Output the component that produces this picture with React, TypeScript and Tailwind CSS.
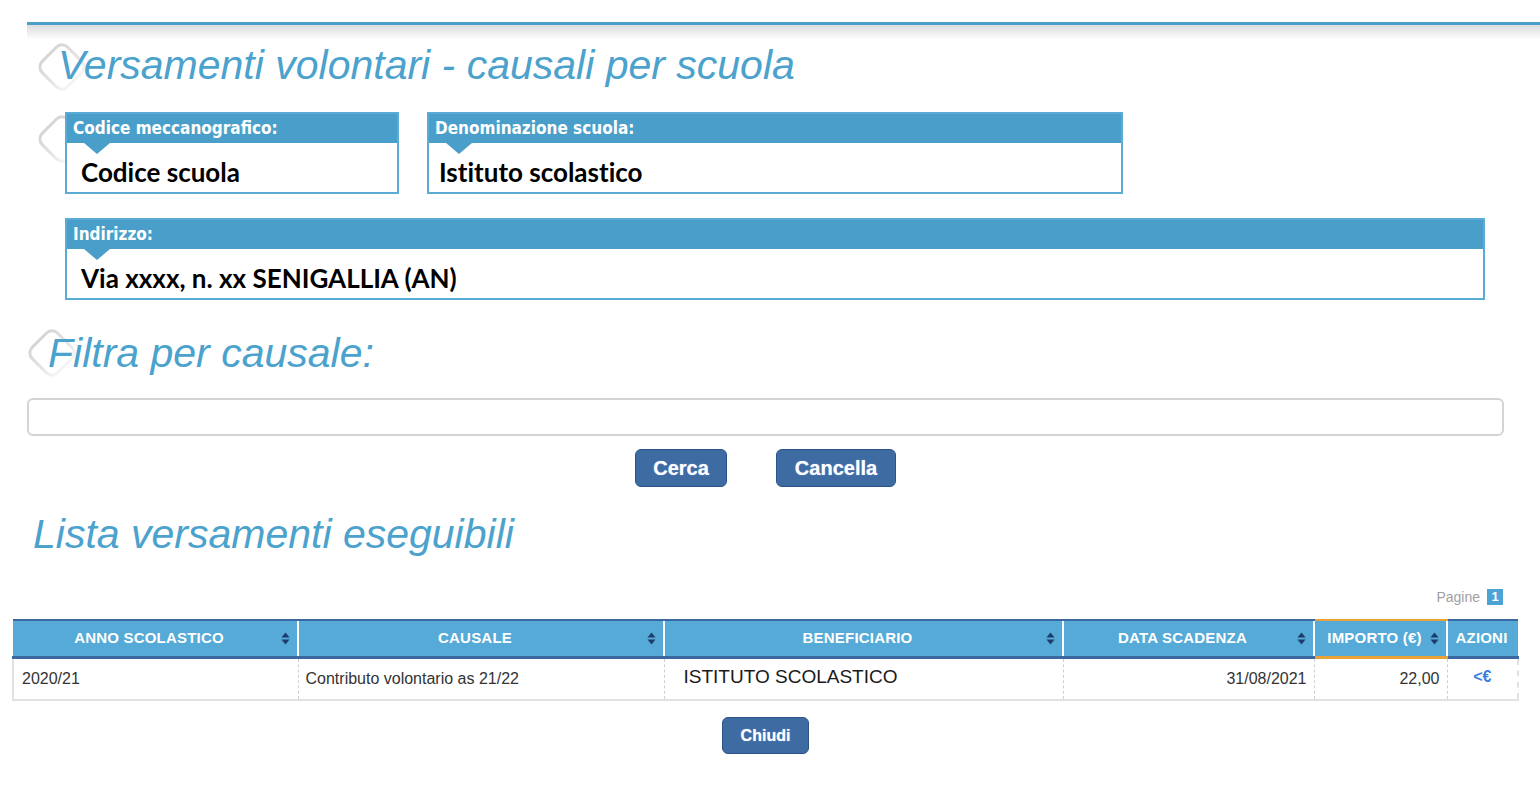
import React from 'react';

const SANS = '[font-family:"Liberation_Sans",Arial,sans-serif]';

function Diamond({ className }: { className: string }) {
  return (
    <svg className={className} width="60" height="60" viewBox="0 0 60 60" fill="none">
      <defs>
        <linearGradient id="dg" x1="0" y1="0" x2="1" y2="0">
          <stop offset="0" stopColor="#d6d6d6" />
          <stop offset="0.6" stopColor="#e4e4e4" />
          <stop offset="1" stopColor="#f4f4f4" />
        </linearGradient>
      </defs>
      <rect x="12" y="12" width="36" height="36" rx="8" transform="rotate(45 30 30)" stroke="url(#dg)" strokeWidth="3" />
    </svg>
  );
}

function SortIcon() {
  return (
    <svg width="9" height="13" viewBox="0 0 9 13" className="shrink-0">
      <path d="M4.5 0.5 L8.5 5.5 H0.5 Z" fill="#1d3c6c" />
      <path d="M4.5 12.5 L8.5 7.5 H0.5 Z" fill="#1d3c6c" />
    </svg>
  );
}

function InfoBox({ label, value, className, valuePad = 'pl-[14px]' }: { label: string; value: string; className: string; valuePad?: string }) {
  return (
    <div className={`relative border-2 border-[#5aabd6] bg-white ${className}`}>
      <div className="h-[29px] bg-[#4a9fca] pl-[6px] text-[17px] font-bold leading-[29px] text-white [font-family:'Liberation_Sans_Narrow','DejaVu_Sans_Condensed',sans-serif]">
        {label}
      </div>
      <div className="absolute left-[17px] top-[29px] h-0 w-0 border-l-[13px] border-r-[13px] border-t-[11px] border-l-transparent border-r-transparent border-t-[#4a9fca]" />
      <div className={`h-[49px] ${valuePad} pt-[14px] text-[26px] font-bold leading-[30px] text-black [font-family:Lato,sans-serif] [font-variant-ligatures:none]`}>
        {value}
      </div>
    </div>
  );
}

const headers = [
  { label: 'ANNO SCOLASTICO', w: 'w-[285px]', sort: true },
  { label: 'CAUSALE', w: 'w-[366px]', sort: true },
  { label: 'BENEFICIARIO', w: 'w-[399px]', sort: true },
  { label: 'DATA SCADENZA', w: 'w-[251px]', sort: true },
  { label: 'IMPORTO (€)', w: 'w-[133px]', sort: true, active: true },
  { label: 'AZIONI', w: 'w-[71px]', sort: false },
];

export default function App() {
  return (
    <div className={`relative h-[786px] w-[1540px] overflow-hidden bg-white ${SANS}`}>
      {/* top rule */}
      <div className="ml-[27px] mt-[22px] h-[3px] bg-[#4a9fca]" />
      <div className="ml-[27px] h-[15px] bg-gradient-to-b from-[#dcdcdc] to-white" />

      {/* page title */}
      <div className="relative h-[50px]">
        <Diamond className="absolute left-[32px] top-[-3px]" />
        <h1 className="relative pl-[58px] text-[41px] font-normal italic leading-[50px] text-[#4ba2cd]">
          Versamenti volontari - causali per scuola
        </h1>
      </div>

      {/* school info */}
      <div className="relative mt-[22px] flex pl-[65px]">
        <Diamond className="absolute left-[32px] top-[-3px]" />
        <InfoBox label="Codice meccanografico:" value="Codice scuola" className="w-[334px]" />
        <InfoBox label="Denominazione scuola:" value="Istituto scolastico" className="ml-[28px] w-[696px]" valuePad="pl-[10px]" />
      </div>
      <div className="mt-[24px] pl-[65px]">
        <InfoBox label="Indirizzo:" value="Via xxxx, n. xx SENIGALLIA (AN)" className="w-[1420px]" />
      </div>

      {/* filter */}
      <div className="relative mt-[28px] h-[50px]">
        <Diamond className="absolute left-[22px] top-[-5px]" />
        <h2 className="relative pl-[48px] text-[41px] font-normal italic leading-[50px] text-[#4ba2cd]">
          Filtra per causale:
        </h2>
      </div>
      <div className="mt-[20px] pl-[27px]">
        <input className="block h-[38px] w-[1477px] rounded-[6px] border-2 border-[#d4d4d4] bg-white px-2 text-[16px] outline-none" />
      </div>
      <div className="mt-[13px] flex gap-[49px] pl-[635px]">
        <button className="h-[38px] w-[92px] rounded-[6px] border border-[#2c5387] bg-[#3f6ba3] text-[20px] font-bold text-white [text-shadow:0_0_1px_#9ec5ff]">
          Cerca
        </button>
        <button className="h-[38px] w-[120px] rounded-[6px] border border-[#2c5387] bg-[#3f6ba3] text-[20px] font-bold text-white [text-shadow:0_0_1px_#9ec5ff]">
          Cancella
        </button>
      </div>

      {/* list */}
      <h2 className="mt-[22px] h-[50px] pl-[33px] text-[41px] font-normal italic leading-[50px] text-[#4ba2cd]">
        Lista versamenti eseguibili
      </h2>
      <div className="mt-[28px] flex h-[20px] items-center justify-end gap-[7px] pr-[37px]">
        <span className="text-[14px] text-[#a0a0a0]">Pagine</span>
        <span className="flex h-[16px] w-[16px] items-center justify-center bg-[#4ba3d6] text-[13px] font-bold text-white">1</span>
      </div>

      <div className="mt-[12px] pl-[12px]">
        <table className="w-[1505px] table-fixed border-collapse">
          <thead>
            <tr>
              {headers.map((h, i) => (
                <th
                  key={h.label}
                  className={`${h.w} h-[37px] border-b-[3px] border-t-[2px] bg-[#55aad7] p-0 text-[15px] font-bold text-white ${
                    h.active ? 'border-b-[#e8a238] border-t-[#e8a238]' : 'border-b-[#3a68a0] border-t-[#3a68a0]'
                  } ${i > 0 ? 'border-l-2 border-l-white' : ''}`}
                >
                  <div className="flex items-center pl-[4px] pr-[7px]">
                    <span className="flex-1 text-center tracking-[0.2px]">{h.label}</span>
                    {h.sort && <SortIcon />}
                  </div>
                </th>
              ))}
            </tr>
          </thead>
          <tbody>
            <tr className="h-[43px] border-b-2 border-[#e2e2e2] text-[16px] text-[#333]">
              <td className="border-l-2 border-l-[#e2e2e2] pl-[8px]">2020/21</td>
              <td className="border-l border-dashed border-l-[#cfcfcf] pl-[7px]">Contributo volontario as 21/22</td>
              <td className="border-l border-dashed border-l-[#cfcfcf] pl-[19px] pb-[4px] text-[19px] text-[#1a1a1a]">
                ISTITUTO SCOLASTICO
              </td>
              <td className="border-l border-dashed border-l-[#cfcfcf] pr-[7px] text-right">31/08/2021</td>
              <td className="border-l border-dashed border-l-[#cfcfcf] pr-[7px] text-right">22,00</td>
              <td className="border-l border-r-2 border-dashed border-l-[#cfcfcf] border-r-[#e2e2e2] pb-[4px] text-center text-[16px] font-bold text-[#3b7fe0]">
                &lt;€
              </td>
            </tr>
          </tbody>
        </table>
      </div>

      <div className="mt-[16px] flex justify-center pr-[9px]">
        <button className="h-[37px] w-[87px] rounded-[6px] border border-[#2c5387] bg-[#3f6ba3] text-[16px] font-bold text-white [text-shadow:0_0_1px_#9ec5ff]">
          Chiudi
        </button>
      </div>
    </div>
  );
}
